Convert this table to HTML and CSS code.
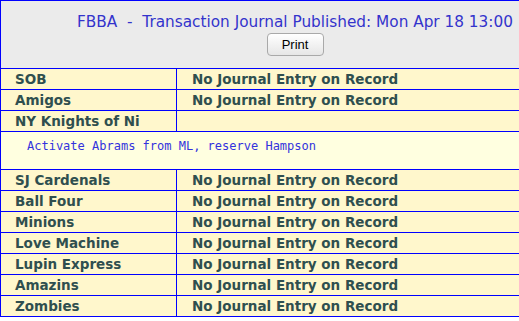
FILE: index.html
```html
<!DOCTYPE html>
<html>
<head>
<meta charset="utf-8">
<link rel="stylesheet" href="styles.css">
</head>
<body>
<table class="journal">
  <tr>
    <td class="head" colspan="2">
      <div class="title">FBBA &nbsp;-&nbsp; Transaction Journal Published: Mon Apr 18 13:00</div>
      <button class="print">Print</button>
    </td>
  </tr>
  <tr><td class="team">SOB</td><td class="status">No Journal Entry on Record</td></tr>
  <tr><td class="team">Amigos</td><td class="status">No Journal Entry on Record</td></tr>
  <tr><td class="team">NY Knights of Ni</td><td class="status"></td></tr>
  <tr><td class="entry" colspan="2">Activate Abrams from ML, reserve Hampson</td></tr>
  <tr><td class="team">SJ Cardenals</td><td class="status">No Journal Entry on Record</td></tr>
  <tr><td class="team">Ball Four</td><td class="status">No Journal Entry on Record</td></tr>
  <tr><td class="team">Minions</td><td class="status">No Journal Entry on Record</td></tr>
  <tr><td class="team">Love Machine</td><td class="status">No Journal Entry on Record</td></tr>
  <tr><td class="team">Lupin Express</td><td class="status">No Journal Entry on Record</td></tr>
  <tr><td class="team">Amazins</td><td class="status">No Journal Entry on Record</td></tr>
  <tr><td class="team">Zombies</td><td class="status">No Journal Entry on Record</td></tr>
</table>
</body>
</html>
```
FILE: styles.css
```css
html {
  overflow: hidden;
}
body {
  margin: 0;
  background: #ffffff;
  font-family: "DejaVu Sans", Verdana, sans-serif;
}
.journal {
  border-collapse: collapse;
  width: 590px;
}
.journal td {
  border: 1px solid #0000ff;
  padding: 0;
}
.head {
  background: #ebebeb;
  text-align: center;
  height: 67px;
  vertical-align: top;
}
.title {
  color: #3333cc;
  font-size: 15.3px;
  line-height: 19px;
  padding-top: 12px;
  padding-bottom: 1px;
}
.print {
  font-family: "Liberation Sans", Arial, sans-serif;
  font-size: 13px;
  color: #000;
  width: 57px;
  height: 23px;
  border: 1px solid #a9a9a9;
  border-radius: 4px;
  background: linear-gradient(#ffffff, #e6e6e6);
  padding: 0;
}
.team, .status {
  background: #fff7cc;
  color: #2f4f4f;
  font-weight: bold;
  font-size: 13.5px;
  line-height: 16px;
  height: 20px;
  box-sizing: border-box;
  padding: 2px 0 2px 14px !important;
}
.team {
  width: 176px;
}
.status {
  padding-left: 15px !important;
}
.entry {
  background: #ffffe0;
  color: #3333dd;
  font-family: "DejaVu Sans Mono", monospace;
  font-size: 12px;
  line-height: 15px;
  padding: 7px 0 15px 26px !important;
}
```
